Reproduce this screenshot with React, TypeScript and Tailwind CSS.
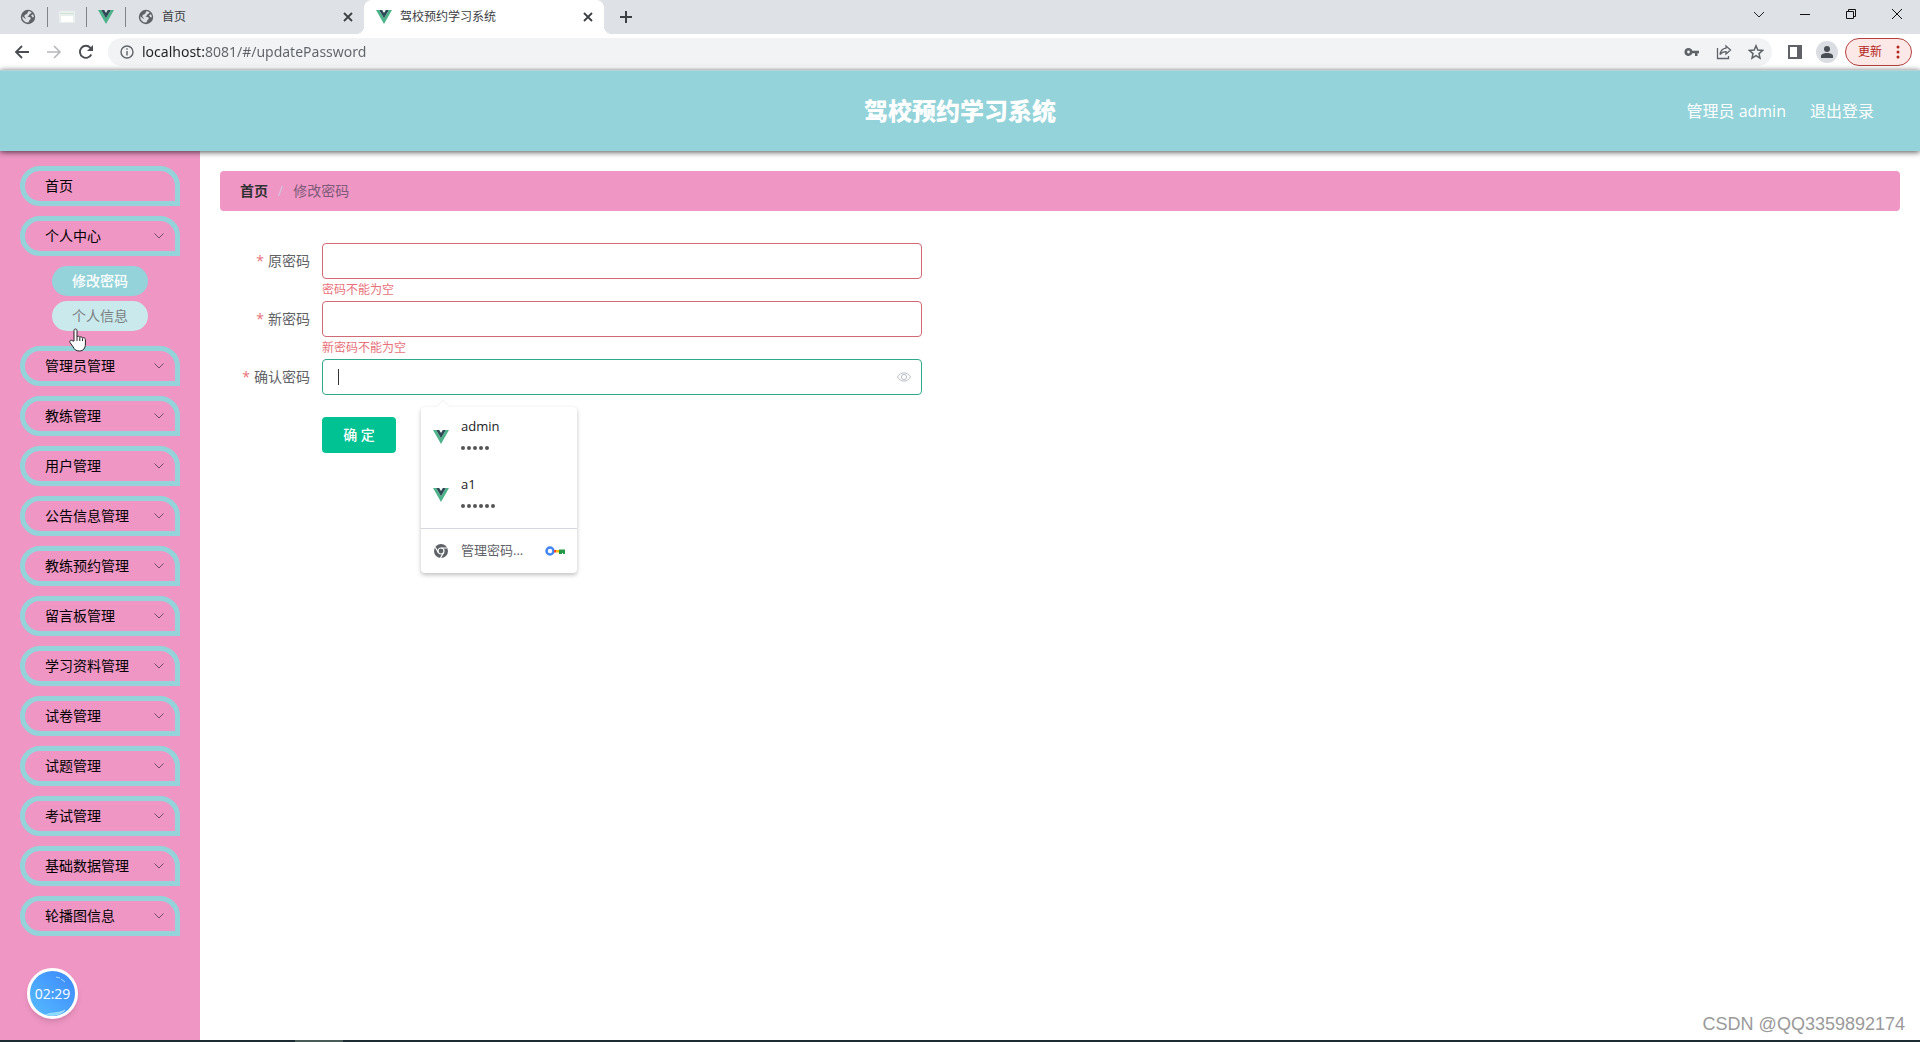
import React from 'react';

const menus = [
  '管理员管理', '教练管理', '用户管理', '公告信息管理', '教练预约管理', '留言板管理',
  '学习资料管理', '试卷管理', '试题管理', '考试管理', '基础数据管理', '轮播图信息',
];

function VueLogo({ className }: { className: string }) {
  return (
    <svg viewBox="0 0 16 14" className={className} aria-hidden="true">
      <path d="M0 0h3.2L8 8.3 12.8 0H16L8 14z" fill="#4db38a" />
      <path d="M3.2 0h3L8 3.1 9.8 0h3L8 8.3z" fill="#2f4a56" />
    </svg>
  );
}

function Globe() {
  return (
    <svg viewBox="0 0 16 16" className="size-4 shrink-0" aria-hidden="true">
      <circle cx="8" cy="8" r="7.2" fill="#5f6368" />
      <path d="M8.200 2.300c1.500 0 2.600.4 3.500 1.200-.3 1-1.500 1-2 1.600-.5.700-.3 1.500-1.400 1.600-.9.100-.9.900-.1 1.100 1.700.2 2.700.6 2.500 1.900-.2.900-1.200.9-1.400 1.900-.2.800-.5 1.700-1.300 2a5.800 5.800 0 0 1-5.700-6.400l3.200 2.700c.7-.7-.6-1.500-1.100-2.500-.3-.9.500-1.600 1.500-1.900 1.200-.3 1.700-1.400 2.300-3.200z" fill="#dee1e6" />
      <path d="M13 5.200c.6 1 .8 1.900.8 2.800-.5.700-1.400.4-1.700-.3-.3-.9-1-.8-.8-1.500.2-.6 1-.5 1.700-1z" fill="#dee1e6" />
    </svg>
  );
}

function CloseGlyph() {
  return (
    <svg viewBox="0 0 10 10" className="size-[10px]" stroke="#3c4043" strokeWidth="1.800" aria-hidden="true">
      <path d="M1 1l8 8M9 1L1 9" />
    </svg>
  );
}

function TabStrip() {
  return (
    <div className="flex h-[34px] items-center bg-[#dee1e6] text-xs text-[#3c4043]">
      <div className="flex h-full items-center pl-5">
        <button aria-label="固定标签页" className="flex w-[27px] items-center"><Globe /></button>
        <span className="h-5 w-px bg-[#808387]" />
        <button aria-label="固定标签页" className="flex w-[38px] justify-center">
          <svg viewBox="0 0 16 14" className="h-[14px] w-4" aria-hidden="true">
            <path d="M0 1h16v12H0z" fill="#e9efec" />
            <path d="M1 3h14v1H1z" fill="#cfe3d6" />
            <path d="M2 6h12v6H2z" fill="#fff" />
          </svg>
        </button>
        <span className="h-5 w-px bg-[#808387]" />
        <button aria-label="固定标签页" className="flex w-[38px] justify-center"><VueLogo className="h-[14px] w-4" /></button>
        <span className="h-5 w-px bg-[#808387]" />
      </div>
      <div className="flex h-full w-[238px] items-center gap-2 pl-3 pr-[11px]">
        <Globe />
        <span className="flex-1">首页</span>
        <button aria-label="关闭首页"><CloseGlyph /></button>
      </div>
      <div className="relative flex h-full w-[240px] items-center gap-2 rounded-t-lg bg-white pl-3 pr-[11px]">
        <span className="absolute -left-2 bottom-0 size-2 bg-[radial-gradient(circle_at_0_0,#dee1e6_8px,#fff_8px)]" />
        <VueLogo className="h-[14px] w-4" />
        <span className="flex-1">驾校预约学习系统</span>
        <button aria-label="关闭标签页"><CloseGlyph /></button>
        <span className="absolute -right-2 bottom-0 size-2 bg-[radial-gradient(circle_at_100%_0,#dee1e6_8px,#fff_8px)]" />
      </div>
      <button aria-label="新标签页" className="ml-4">
        <svg viewBox="0 0 12 12" className="size-3" stroke="#3c4043" strokeWidth="2"><path d="M6 0v12M0 6h12" /></svg>
      </button>
      <div className="ml-auto flex h-full items-start gap-9 pr-[18px] pt-[9px]">
        <button aria-label="搜索标签页"><svg viewBox="0 0 10 10" className="size-[10px]" fill="none" stroke="#222"><path d="M0 3l5 5 5-5" /></svg></button>
        <button aria-label="最小化"><svg viewBox="0 0 10 10" className="size-[10px]" stroke="#111"><path d="M0 5.500h10" /></svg></button>
        <button aria-label="还原"><svg viewBox="0 0 10 10" className="size-[10px]" fill="none" stroke="#111"><path d="M.5 2.500h7v7h-7zM2.500 2.500v-2h7v7h-2" /></svg></button>
        <button aria-label="关闭"><svg viewBox="0 0 10 10" className="size-[10px]" stroke="#111"><path d="M0 0l10 10M10 0L0 10" /></svg></button>
      </div>
    </div>
  );
}

function Toolbar() {
  return (
    <div className="flex h-9 items-center bg-white pl-[14px] pr-2">
      <button aria-label="后退"><svg viewBox="0 0 16 16" className="size-4" fill="none" stroke="#4a4d51" strokeWidth="1.800"><path d="M15 8H2M8 2L2 8l6 6" /></svg></button>
      <button aria-label="前进" className="ml-4"><svg viewBox="0 0 16 16" className="size-4" fill="none" stroke="#b5b7ba" strokeWidth="1.500"><path d="M1 8h13M8 2l6 6-6 6" /></svg></button>
      <button aria-label="重新加载" className="ml-4">
        <svg viewBox="0 0 16 16" className="size-4" fill="none" stroke="#4a4d51" strokeWidth="1.900"><path d="M13.300 10.500A6 6 0 1 1 12.400 3.800L14 5.500" /><path d="M15 1v6H9z" fill="#4a4d51" stroke="none" /></svg>
      </button>
      <div className="ml-[14px] flex h-7 flex-1 items-center rounded-full bg-[#f1f3f4] pl-3 pr-2">
        <svg viewBox="0 0 14 14" className="size-[14px] shrink-0" fill="none" stroke="#5f6368" strokeWidth="1.400"><circle cx="7" cy="7" r="6" /><path d="M7 6v4.500M7 3.300v1.500" /></svg>
        <input aria-label="地址" defaultValue="localhost:8081/#/updatePassword" className="ml-2 min-w-0 flex-1 bg-[linear-gradient(to_right,#202124_62px,#5f6368_62px)] bg-clip-text font-['Noto_Sans',sans-serif] text-sm text-transparent caret-black outline-none" />
        <button aria-label="密码"><svg viewBox="0 0 16 16" className="size-4" fill="#5f6368"><path fillRule="evenodd" d="M4.500 4a4 4 0 0 1 3.800 2.800H15v2.400h-1.500V12H11V9.200H8.300A4 4 0 1 1 4.500 4zm0 2.600a1.400 1.400 0 1 0 0 2.800 1.400 1.400 0 0 0 0-2.800z" /></svg></button>
        <button aria-label="分享" className="ml-4"><svg viewBox="0 0 16 16" className="size-4" fill="none" stroke="#5f6368" strokeWidth="1.300"><path d="M1.500 4v10.500h11V12M10 2l4.500 4L10 10V7.700C7.500 7.700 5.500 8.500 4 10.500 4.500 7 6.500 4.700 10 4.200z" /></svg></button>
        <button aria-label="收藏" className="ml-4"><svg viewBox="0 0 16 16" className="size-4" fill="none" stroke="#5f6368" strokeWidth="1.500"><path d="M8 1.800l1.800 4.300 4.700.4-3.500 3.100 1 4.500L8 11.700l-4 2.400 1-4.500-3.500-3.100 4.700-.4z" /></svg></button>
      </div>
      <button aria-label="侧边栏" className="ml-4"><svg viewBox="0 0 14 14" className="size-[14px]"><path d="M1 1h12v12H1z" fill="none" stroke="#5f6368" strokeWidth="2" /><path d="M9 1h4v12H9z" fill="#5f6368" /></svg></button>
      <button aria-label="用户" className="ml-[14px] flex size-[22px] items-center justify-center rounded-full bg-[#dadde2]"><svg viewBox="0 0 12 12" className="size-3" fill="#4a4e55"><circle cx="6" cy="3" r="3" /><path d="M0 12V10c0-2 3-3 6-3s6 1 6 3v2z" /></svg></button>
      <button className="ml-[7px] flex h-7 w-[67px] items-center justify-between rounded-full border border-[#b3403f] bg-[#fce8e6] pl-3 pr-[11px] text-xs text-[#b3261e]">
        更新
        <svg viewBox="0 0 4 14" className="h-[14px] w-1" fill="#b3261e"><circle cx="2" cy="2" r="1.500" /><circle cx="2" cy="7" r="1.500" /><circle cx="2" cy="12" r="1.500" /></svg>
      </button>
    </div>
  );
}

function MenuItem({ label, arrow = true }: { label: string; arrow?: boolean }) {
  return (
    <button className="flex h-10 w-full shrink-0 items-center justify-between rounded-[20px] rounded-br-none border-[5px] border-[#93d3d9] pl-5 pr-[11px] text-sm text-black">
      {label}
      {arrow && <svg viewBox="0 0 10 6" className="h-[6px] w-[10px]" fill="none" stroke="#704b6a"><path d="M.5.500L5 5 9.500.500" /></svg>}
    </button>
  );
}

function Sidebar() {
  return (
    <nav className="relative w-[200px] shrink-0 bg-[#ef96c4] px-5 pt-[15px]">
      <div className="flex flex-col gap-[10px]">
        <MenuItem label="首页" arrow={false} />
        <MenuItem label="个人中心" />
        <div className="mb-[5px] flex flex-col items-center gap-[5px]">
          <button className="h-[30px] w-24 rounded-full bg-[#93d3d9] text-sm font-medium text-white">修改密码</button>
          <button className="h-[30px] w-24 rounded-full bg-[#c9e9ec] text-sm text-[#7b7f83]">个人信息</button>
        </div>
        {menus.map((m) => <MenuItem key={m} label={m} />)}
      </div>
      <svg viewBox="0 0 18 24" className="absolute left-[69px] top-[177px] h-6 w-[18px]" aria-hidden="true">
        <path d="M5 13V2.500C5 .500 8 .500 8 2.500V9c.5-1.200 2.600-1 2.800.4.700-1 2.600-.6 2.700.7.900-.8 2.900-.3 2.900 1.500V16c0 4-2 7-6 7-3.500 0-4.800-1.500-6.200-4L1 14.500c-1-2 1.500-3 2.700-1.600z" fill="#fff" stroke="#222" />
        <path d="M8 9v4M10.800 9.500V13M13.500 10.500V13" stroke="#222" />
      </svg>
      <div className="absolute bottom-[21px] left-[27px] flex size-[51px] items-center justify-center overflow-hidden rounded-full border-[3px] border-white bg-linear-to-tr from-[#58bcff] to-[#3d86fb] text-sm text-white shadow-md">
        <svg viewBox="0 0 45 45" className="absolute inset-0" fill="none" stroke="#a7dcff" aria-hidden="true">
          <path d="M26 6l4 1M31 8l4 3" /><path d="M16 44c5-3 12-1 19-5-4 5-12 6-19 5z" fill="#7fe0f5" />
        </svg>
        <span className="relative">02:29</span>
      </div>
    </nav>
  );
}

function Field({ id, label, error, active }: { id: string; label: string; error?: string; active?: boolean }) {
  return (
    <div className="flex h-[58px]">
      <label htmlFor={id} className="w-[102px] shrink-0 pr-3 text-right text-sm leading-9 text-[#606266]">
        <span className="mr-1 text-[#e8717a]">*</span>{label}
      </label>
      <div className="w-[600px]">
        <div className={active ? 'flex h-9 items-center rounded border border-[#2fa98c] pl-[15px] pr-[10px]' : 'flex h-9 items-center rounded border border-[#d06a74] px-[15px]'}>
          {active && <span className="h-4 w-px bg-[#333]" />}
          <input id={id} type="password" className="min-w-0 flex-1 bg-transparent text-sm outline-none" />
          {active && (
            <button type="button" aria-label="显示密码">
              <svg viewBox="0 0 14 14" className="size-[14px]" fill="none" stroke="#b9bdc6"><path d="M.5 7C3.500 1.500 10.500 1.500 13.500 7 10.500 12.500 3.500 12.500.500 7z" /><circle cx="7" cy="7" r="2.600" /></svg>
            </button>
          )}
        </div>
        {error && <p className="pt-[3px] text-xs leading-4 text-[#e8717a]">{error}</p>}
      </div>
    </div>
  );
}

function Credential({ name, count }: { name: string; count: number }) {
  return (
    <button type="button" className="flex h-[58px] w-full items-center pl-3 text-left">
      <VueLogo className="h-[14px] w-4" />
      <span className="ml-3 flex flex-col text-[13px] leading-[22px] text-[#202124]">
        {name}
        <span className="flex h-[22px] items-center gap-[2px]">
          {Array.from({ length: count }, (_, i) => <span key={i} className="size-1 rounded-full bg-[#555]" />)}
        </span>
      </span>
    </button>
  );
}

function PasswordPopup() {
  return (
    <div className="absolute left-[201px] top-[164px] w-[156px] rounded-sm bg-white pt-px shadow-[0_2px_4px_rgba(0,0,0,0.25)]">
      <svg viewBox="0 0 16 8" className="absolute -top-[7px] left-[14px] h-2 w-4" aria-hidden="true"><path d="M0 8l8-8 8 8z" fill="#fff" /><path d="M1 7l7-7 7 7" fill="none" stroke="#f1f1f1" /></svg>
      <Credential name="admin" count={5} />
      <Credential name="a1" count={6} />
      <button type="button" className="mt-1 flex h-[45px] w-full items-center border-t border-[#d5d8dc] px-3 text-[13px] text-[#5f6368]">
        <svg viewBox="0 0 16 16" className="size-4" aria-hidden="true"><circle cx="8" cy="8" r="7" fill="#5f6368" /><circle cx="8" cy="8" r="3" fill="#5f6368" stroke="#fff" strokeWidth="1.200" /><path d="M8 5h6.300M5.400 9.500L2.200 4.200M10.600 9.500L7.500 15" stroke="#fff" strokeWidth="1.200" /></svg>
        <span className="ml-3">管理密码...</span>
        <svg viewBox="0 0 20 10" className="ml-auto h-[10px] w-5" aria-hidden="true"><circle cx="5" cy="5" r="3.500" fill="none" stroke="#4285f4" strokeWidth="2.500" /><path d="M9 4h2v2.500H9z" fill="#ea4335" /><path d="M11 4h3v2.500h-3z" fill="#fbbc04" /><path d="M14 3.500h6V8h-2V7h-1v1h-3z" fill="#249a46" /></svg>
      </button>
    </div>
  );
}

export default function App() {
  return (
    <div className="flex min-h-screen flex-col bg-white font-['Open_Sans','Noto_Sans_CJK_SC',sans-serif]">
      <TabStrip />
      <Toolbar />
      <header className="relative z-10 grid h-[81px] grid-cols-[1fr_auto_1fr] items-center border-t border-[#b5d5d8] bg-[#93d3d9] text-white shadow-[0_1px_6px_rgba(0,0,0,0.7)]">
        <h1 className="col-start-2 text-2xl font-black">驾校预约学习系统</h1>
        <div className="flex justify-end gap-6 pr-[46px] text-base">
          <span>管理员 admin</span>
          <button>退出登录</button>
        </div>
      </header>
      <div className="flex flex-1">
        <Sidebar />
        <main className="relative min-w-0 flex-1 px-5 pt-5">
          <nav aria-label="面包屑" className="flex h-10 items-center rounded bg-[#ef96c4] px-5 text-sm">
            <a href="#/" className="font-bold text-[#303133]">首页</a>
            <span className="mx-[10px] text-[#d3c6e0]">/</span>
            <span className="text-[#7d5a78]">修改密码</span>
          </nav>
          <form className="relative mt-8">
            <Field id="old" label="原密码" error="密码不能为空" />
            <Field id="new" label="新密码" error="新密码不能为空" />
            <Field id="confirm" label="确认密码" active />
            <button type="button" className="ml-[102px] h-9 w-[74px] rounded bg-[#00c292] text-sm font-medium text-white">确 定</button>
            <PasswordPopup />
          </form>
          <p className="absolute bottom-[2px] right-[15px] font-['Liberation_Sans',sans-serif] text-lg text-[#9a9a9a]">CSDN @QQ3359892174</p>
        </main>
      </div>
      <div className="flex h-[2px] bg-[#1d2b33] pl-[295px]"><span className="w-12 bg-[#4a5c58]" /></div>
    </div>
  );
}
